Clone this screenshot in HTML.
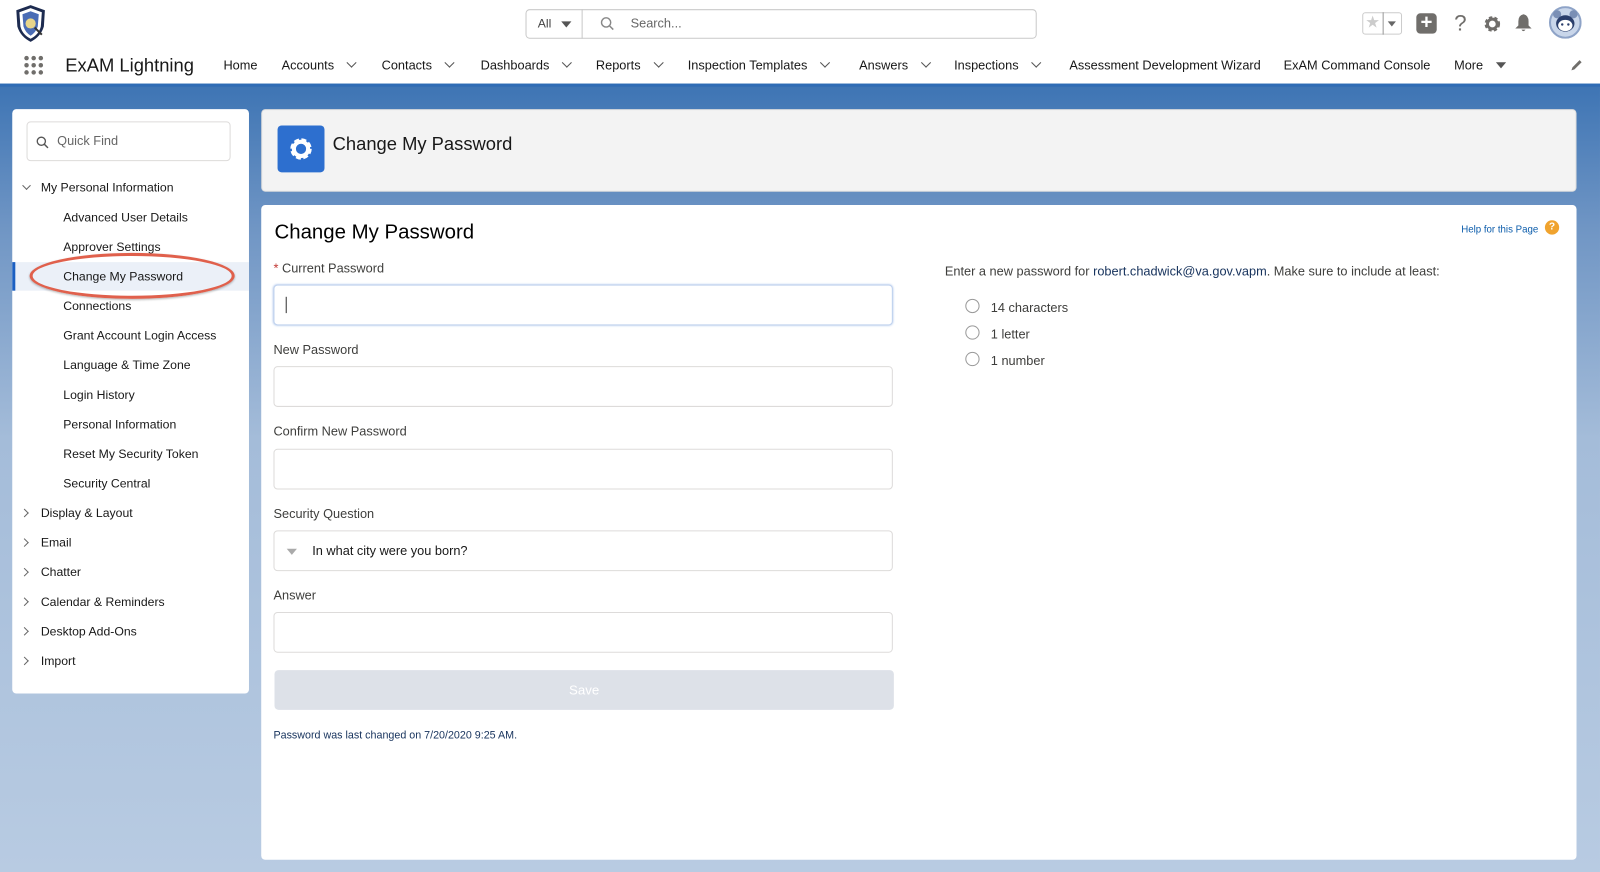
<!DOCTYPE html>
<html><head><meta charset="utf-8"><style>
*{box-sizing:border-box;margin:0;padding:0}
html,body{width:1600px;height:872px;overflow:hidden;background:#fff}
#w{position:absolute;left:0;top:0;width:1568px;height:855px;transform:scale(1.0204,1.0199);transform-origin:0 0;font-family:"Liberation Sans",sans-serif;color:#181818}
.a{position:absolute}
.nav{position:absolute;top:57px;font-size:12.5px;color:#181818;white-space:nowrap}
.chev{display:inline-block;width:7px;height:7px;border-right:1.3px solid #555;border-bottom:1.3px solid #555;transform:rotate(45deg);margin-left:14px;position:relative;top:-3px}
.side{position:absolute;font-size:12px;color:#181818;white-space:nowrap}
.lbl{position:absolute;left:268px;font-size:12.5px;color:#3e3e3c}
.inp{position:absolute;left:268px;width:607px;height:40px;border:1px solid #dddbda;border-radius:4px;background:#fff}
.tri{position:absolute;width:6px;height:6px;border-right:1.3px solid #666;border-bottom:1.3px solid #666;transform:rotate(-45deg)}
.rad{position:absolute;left:946px;width:14px;height:14px;border:1px solid #999;border-radius:50%}
.rt{position:absolute;left:971px;font-size:12.5px;color:#3e3e3c}
</style></head><body><div id="w">
<svg class="a" style="left:14px;top:4px" width="34" height="38" viewBox="0 0 34 38"><path d="M16 1 L30 6 L29 22 Q26 32 16 37 Q6 32 3 22 L2 6 Z" fill="#1d2b50"/><path d="M16 4 L27 8 L26 22 Q24 30 16 34 Q8 30 6 22 L5 8 Z" fill="#fff"/><path d="M16 7 L24 10 L23 22 Q21 28 16 31 Q11 28 9 22 L8 10 Z" fill="#4a6cb5"/><circle cx="16" cy="19" r="5" fill="#e8d58a"/><line x1="20" y1="23" x2="27" y2="30" stroke="#333" stroke-width="2"/></svg>
<div class="a" style="left:515px;top:9px;width:501px;height:29px;border:1px solid #c9c9c9;border-radius:4px"></div>
<div class="a" style="left:570px;top:9px;width:1px;height:29px;background:#c9c9c9"></div>
<div class="a" style="left:527px;top:16px;font-size:12px;color:#444">All</div>
<div class="a" style="left:550px;top:21px;border-left:5px solid transparent;border-right:5px solid transparent;border-top:6px solid #555"></div>
<svg class="a" style="left:588px;top:16px" width="14" height="14"><circle cx="6" cy="6" r="4.5" fill="none" stroke="#888" stroke-width="1.4"/><line x1="9.5" y1="9.5" x2="13" y2="13" stroke="#888" stroke-width="1.5"/></svg>
<div class="a" style="left:618px;top:16px;font-size:12.5px;color:#666">Search...</div>
<div class="a" style="left:1335px;top:12px;width:39px;height:22px;border:1px solid #ccc;border-radius:3px"></div>
<div class="a" style="left:1355px;top:12px;width:1px;height:22px;background:#999"></div>
<div class="a" style="left:1338px;top:12px;font-size:16px;color:#ccc">★</div>
<div class="a" style="left:1360px;top:21px;border-left:4px solid transparent;border-right:4px solid transparent;border-top:5px solid #666"></div>
<div class="a" style="left:1388px;top:13px;width:20px;height:20px;background:#706e6b;border-radius:4px;color:#fff;font-size:20px;line-height:19px;text-align:center;font-weight:bold">+</div>
<div class="a" style="left:1425px;top:10px;font-size:22px;color:#706e6b">?</div>
<svg class="a" style="left:1453px;top:14px" width="19" height="19" viewBox="0 0 20 20"><circle cx="10" cy="10" r="6" fill="none" stroke="#706e6b" stroke-width="4" stroke-dasharray="3 2"/><circle cx="10" cy="10" r="5" fill="none" stroke="#706e6b" stroke-width="3"/></svg>
<svg class="a" style="left:1484px;top:13px" width="18" height="19" viewBox="0 0 18 19"><path d="M9 1 Q4 2 4 8 L4 12 L1 15 L17 15 L14 12 L14 8 Q14 2 9 1Z M7 16 Q9 19 11 16Z" fill="#706e6b"/></svg>
<svg class="a" style="left:1518px;top:6px" width="32" height="32" viewBox="0 0 32 32"><circle cx="16" cy="16" r="15" fill="#c9d6ea" stroke="#8ea3c7" stroke-width="2"/><circle cx="8" cy="8" r="4" fill="#7a8fb5"/><circle cx="24" cy="8" r="4" fill="#7a8fb5"/><ellipse cx="16" cy="17" rx="9" ry="8" fill="#2a3e6b"/><ellipse cx="16" cy="19" rx="7" ry="5.5" fill="#fff"/><circle cx="13" cy="18" r="1.2" fill="#2a3e6b"/><circle cx="19" cy="18" r="1.2" fill="#2a3e6b"/></svg>
<svg class="a" style="left:23px;top:54px" width="21" height="21"><g fill="#706e6b"><circle cx="3" cy="3" r="2.2"/><circle cx="10" cy="3" r="2.2"/><circle cx="17" cy="3" r="2.2"/><circle cx="3" cy="10" r="2.2"/><circle cx="10" cy="10" r="2.2"/><circle cx="17" cy="10" r="2.2"/><circle cx="3" cy="17" r="2.2"/><circle cx="10" cy="17" r="2.2"/><circle cx="17" cy="17" r="2.2"/></g></svg>
<div class="a" style="left:64px;top:54px;font-size:18px;color:#181818">ExAM Lightning</div>
<div class="nav" style="left:219px">Home</div>
<div class="nav" style="left:276px">Accounts<span class="chev"></span></div>
<div class="nav" style="left:374px">Contacts<span class="chev"></span></div>
<div class="nav" style="left:471px">Dashboards<span class="chev"></span></div>
<div class="nav" style="left:584px">Reports<span class="chev"></span></div>
<div class="nav" style="left:674px">Inspection Templates<span class="chev"></span></div>
<div class="nav" style="left:842px">Answers<span class="chev"></span></div>
<div class="nav" style="left:935px">Inspections<span class="chev"></span></div>
<div class="nav" style="left:1048px">Assessment Development Wizard</div>
<div class="nav" style="left:1258px">ExAM Command Console</div>
<div class="nav" style="left:1425px">More</div>
<div class="a" style="left:1466px;top:61px;border-left:5px solid transparent;border-right:5px solid transparent;border-top:6px solid #555"></div>
<svg class="a" style="left:1538px;top:57px" width="14" height="14"><path d="M2 12 L3 9 L10 2 L12 4 L5 11 Z" fill="#706e6b"/></svg>
<div class="a" style="left:0;top:82px;width:1568px;height:773px;background:linear-gradient(180deg,#3d74b4 0%,#6f95c4 18%,#a4bcd9 45%,#b8cbe2 100%)"></div>
<div class="a" style="left:0;top:82px;width:1568px;height:3px;background:#2f6cb5"></div>
<div class="a" style="left:12px;top:107px;width:232px;height:573px;background:#fff;border-radius:4px"></div>
<div class="a" style="left:26px;top:119px;width:200px;height:39px;border:1px solid #dddbda;border-radius:4px"></div>
<svg class="a" style="left:35px;top:133px" width="13" height="13"><circle cx="5.5" cy="5.5" r="4" fill="none" stroke="#555" stroke-width="1.3"/><line x1="8.5" y1="8.5" x2="12" y2="12" stroke="#555" stroke-width="1.4"/></svg>
<div class="a" style="left:56px;top:131px;font-size:12.5px;color:#666">Quick Find</div>
<div class="a" style="left:12px;top:257px;width:232px;height:28px;background:#ebf0f8"></div>
<div class="a" style="left:12px;top:257px;width:3px;height:28px;background:#1b5fc1"></div>
<div class="tri" style="left:23px;top:179px;transform:rotate(45deg)"></div>
<div class="side" style="left:40px;top:177px">My Personal Information</div>
<div class="side" style="left:62px;top:206px">Advanced User Details</div>
<div class="side" style="left:62px;top:235px">Approver Settings</div>
<div class="side" style="left:62px;top:264px">Change My Password</div>
<div class="side" style="left:62px;top:293px">Connections</div>
<div class="side" style="left:62px;top:322px">Grant Account Login Access</div>
<div class="side" style="left:62px;top:351px">Language &amp; Time Zone</div>
<div class="side" style="left:62px;top:380px">Login History</div>
<div class="side" style="left:62px;top:409px">Personal Information</div>
<div class="side" style="left:62px;top:438px">Reset My Security Token</div>
<div class="side" style="left:62px;top:467px">Security Central</div>
<div class="tri" style="left:21px;top:500px"></div><div class="side" style="left:40px;top:496px">Display &amp; Layout</div>
<div class="tri" style="left:21px;top:529px"></div><div class="side" style="left:40px;top:525px">Email</div>
<div class="tri" style="left:21px;top:558px"></div><div class="side" style="left:40px;top:554px">Chatter</div>
<div class="tri" style="left:21px;top:587px"></div><div class="side" style="left:40px;top:583px">Calendar &amp; Reminders</div>
<div class="tri" style="left:21px;top:616px"></div><div class="side" style="left:40px;top:612px">Desktop Add-Ons</div>
<div class="tri" style="left:21px;top:645px"></div><div class="side" style="left:40px;top:641px">Import</div>
<div class="a" style="left:29px;top:248px;width:201px;height:45px;border:3.5px solid #e0604c;border-radius:50%;box-shadow:0 1px 2px rgba(0,0,0,.3)"></div>
<div class="a" style="left:256px;top:107px;width:1289px;height:81px;background:#f3f3f3;border-radius:4px;border:1px solid #ddd"></div>
<div class="a" style="left:272px;top:123px;width:46px;height:46px;background:#2d6fcf;border-radius:4px"></div>
<svg class="a" style="left:281px;top:132px" width="28" height="28" viewBox="0 0 28 28"><circle cx="14" cy="14" r="8" fill="none" stroke="#fff" stroke-width="5" stroke-dasharray="4.2 2.1"/><circle cx="14" cy="14" r="7" fill="none" stroke="#fff" stroke-width="4"/></svg>
<div class="a" style="left:326px;top:131px;font-size:18px;color:#181818">Change My Password</div>
<div class="a" style="left:256px;top:201px;width:1289px;height:642px;background:#fff;border-radius:4px"></div>
<div class="a" style="left:269px;top:217px;font-size:20px;color:#000">Change My Password</div>
<div class="a" style="left:1432px;top:220px;font-size:9.5px;color:#0b5cab">Help for this Page</div>
<div class="a" style="left:1514px;top:216px;width:14px;height:14px;border-radius:50%;background:#f0a32e;color:#fff;font-size:10px;text-align:center;line-height:14px;font-weight:bold">?</div>
<div class="lbl" style="top:256px"><span style="color:#c23934">* </span>Current Password</div>
<div class="inp" style="top:279px;border-color:#c0d2ee;box-shadow:0 0 2px #aac3ea"></div>
<div class="a" style="left:280px;top:291px;width:1px;height:16px;background:#333"></div>
<div class="lbl" style="top:336px">New Password</div>
<div class="inp" style="top:359px"></div>
<div class="lbl" style="top:416px">Confirm New Password</div>
<div class="inp" style="top:440px"></div>
<div class="lbl" style="top:497px">Security Question</div>
<div class="inp" style="top:520px"></div>
<div class="a" style="left:281px;top:538px;border-left:5px solid transparent;border-right:5px solid transparent;border-top:6px solid #aaa"></div>
<div class="a" style="left:306px;top:533px;font-size:12.5px;color:#181818">In what city were you born?</div>
<div class="lbl" style="top:577px">Answer</div>
<div class="inp" style="top:600px"></div>
<div class="a" style="left:269px;top:657px;width:607px;height:39px;background:#dde1e8;border-radius:4px;color:#fff;font-size:13px;text-align:center;line-height:39px">Save</div>
<div class="a" style="left:268px;top:715px;font-size:10.5px;color:#16325c">Password was last changed on 7/20/2020 9:25 AM.</div>
<div class="a" style="left:926px;top:259px;font-size:12.5px;color:#3e3e3c">Enter a new password for <span style="color:#16325c">robert.chadwick@va.gov.vapm</span>. Make sure to include at least:</div>
<div class="rad" style="top:293px"></div><div class="rt" style="top:295px">14 characters</div>
<div class="rad" style="top:319px"></div><div class="rt" style="top:321px">1 letter</div>
<div class="rad" style="top:345px"></div><div class="rt" style="top:347px">1 number</div>
</div></body></html>
